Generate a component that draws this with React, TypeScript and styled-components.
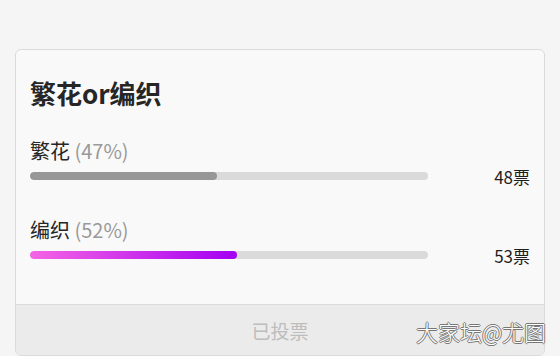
import React from "react";
import styled, { createGlobalStyle } from "styled-components";

const GlobalStyle = createGlobalStyle`
  html, body {
    margin: 0;
    padding: 0;
    background: #f5f5f5;
    font-family: "Noto Sans CJK SC", "Noto Sans", sans-serif;
  }
`;

const Page = styled.div`
  position: relative;
  width: 560px;
  height: 356px;
  overflow: hidden;
  padding: 49px 15px 0;
  box-sizing: border-box;
`;

const Card = styled.div`
  background: #f9f9f9;
  border: 1px solid #dadada;
  border-radius: 6px;
  height: 307px;
  box-sizing: border-box;
  display: flex;
  flex-direction: column;
  overflow: hidden;
`;

const Body = styled.div`
  flex: 1;
  padding: 27px 14px 0;
`;

const Title = styled.div`
  font-size: 26px;
  font-weight: 700;
  line-height: 32px;
  color: #262626;
  margin-bottom: 29px;
`;

const Option = styled.div<{ $gap?: number }>`
  margin-top: ${(p) => p.$gap ?? 0}px;
`;

const Label = styled.div`
  font-size: 20px;
  line-height: 26px;
  color: #262626;
`;

const Percent = styled.span`
  color: #999;
`;

const BarRow = styled.div`
  display: flex;
  align-items: center;
  margin-top: 8px;
  height: 8px;
`;

const Track = styled.div`
  width: 398px;
  height: 8px;
  border-radius: 4px;
  background: #dadada;
  overflow: hidden;
`;

const Fill = styled.div<{ $purple?: boolean }>`
  height: 100%;
  border-radius: 4px;
  background: ${(p) =>
    p.$purple ? "linear-gradient(to right, #f565e4, #a300f2)" : "#979797"};
`;

const Votes = styled.div`
  flex: 1;
  text-align: right;
  font-size: 17px;
  color: #1e1e1e;
  line-height: 20px;
  margin-top: 2px;
`;

const Footer = styled.div`
  height: 50px;
  border-top: 1px solid #dcdcdc;
  background: #ebebeb;
  display: flex;
  align-items: center;
  justify-content: center;
  font-size: 19px;
  color: #bdbdbd;
`;

const Watermark = styled.div`
  position: absolute;
  right: 14px;
  bottom: 12px;
  font-size: 22px;
  line-height: 26px;
  color: #fff;
  text-shadow: -1px 0 #777, 1px 0 #777, 0 -1px #777, 0 1px #777;
  font-weight: 300;
`;

const options = [
  { name: "繁花", pct: 47, votes: 48, purple: false },
  { name: "编织", pct: 52, votes: 53, purple: true },
];

export default function App() {
  return (
    <>
      <GlobalStyle />
      <Page>
        <Card>
          <Body>
            <Title>繁花or编织</Title>
            {options.map((o, i) => (
              <Option key={o.name} $gap={i === 0 ? 0 : 37}>
                <Label>
                  {o.name} <Percent>({o.pct}%)</Percent>
                </Label>
                <BarRow>
                  <Track>
                    <Fill $purple={o.purple} style={{ width: `${o.pct}%` }} />
                  </Track>
                  <Votes>{o.votes}票</Votes>
                </BarRow>
              </Option>
            ))}
          </Body>
          <Footer>已投票</Footer>
        </Card>
        <Watermark>大家坛@尤图</Watermark>
      </Page>
    </>
  );
}
